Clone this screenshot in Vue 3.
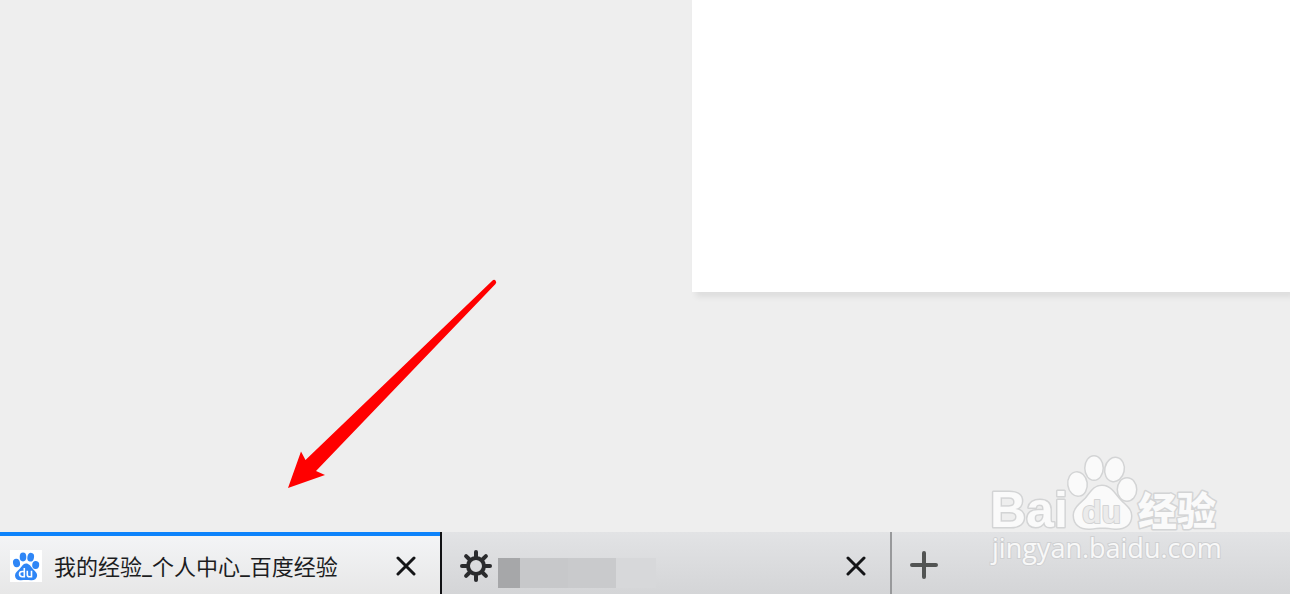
<script setup>
const tabs = [
  { id: 1, title: '我的经验_个人中心_百度经验', icon: 'paw', active: true },
  { id: 2, title: '', icon: 'gear', active: false },
]
const rays = [0, 45, 90, 135, 180, 225, 270, 315]
</script>

<template>
  <div class="browser">
    <main class="viewport">
      <section class="panel"></section>
    </main>

    <nav class="tabbar" aria-label="Tabs">
      <div v-for="tab in tabs" :key="tab.id" class="tab" :class="{ active: tab.active }">
        <button class="label" type="button" :aria-label="tab.title || 'Settings'">
          <svg v-if="tab.icon === 'paw'" class="icon" viewBox="0 0 32 32" aria-hidden="true">
            <rect width="32" height="32" fill="#fff" />
            <g fill="#2f86f6">
              <ellipse cx="6.5" cy="13" rx="3.5" ry="4.300" transform="rotate(-10 6.5 13)" />
              <ellipse cx="13" cy="7" rx="3.300" ry="4.400" />
              <ellipse cx="20.7" cy="7.2" rx="3.300" ry="4.400" transform="rotate(12 20.7 7.2)" />
              <ellipse cx="25.7" cy="15" rx="3.500" ry="4" transform="rotate(5 25.7 15)" />
              <path d="M16 13.500c3 0 4.500 2.500 6.500 5s5 4 4.600 7.500c-.5 3-3 4.500-6.100 4.200-3.500-.4-6.500-.4-10 0C7.500 30.500 5 29 5 25.500c0-3 2.500-4.500 4.500-6.500s3.500-5.500 6.500-5.500z" />
            </g>
            <g fill="none" stroke="#fff" stroke-width="1.600">
              <path d="M14.300 18v9.500M14.300 21.500h-2c-3.700 0-3.700 5.200 0 5.200h2" />
              <path d="M17.300 20.800v4q0 2 2 2h2.200v-6" />
            </g>
          </svg>
          <svg v-else class="icon" viewBox="0 0 32 32" aria-hidden="true">
            <g fill="none" stroke="#2a2b2d" stroke-width="4" stroke-linecap="round">
              <circle cx="16" cy="16" r="8" />
              <path v-for="r in rays" :key="r" d="M16 6.500V2" :transform="`rotate(${r} 16 16)`" />
            </g>
          </svg>
          <span v-if="tab.title" class="title">{{ tab.title }}</span>
          <span v-else class="mosaic"><i></i><i></i><i></i><i></i></span>
        </button>
        <button class="close" type="button" aria-label="Close tab">
          <svg viewBox="0 0 20 20" aria-hidden="true">
            <path d="M2 2l16 16M18 2L2 18" fill="none" stroke="#141517" stroke-width="3" stroke-linecap="round" />
          </svg>
        </button>
      </div>
      <button class="add" type="button" aria-label="New tab">
        <svg viewBox="0 0 28 28" aria-hidden="true">
          <path d="M14 2v24M2 14h24" fill="none" stroke="#525453" stroke-width="4" stroke-linecap="round" />
        </svg>
      </button>
    </nav>

    <svg class="arrow" viewBox="0 0 210 210" aria-hidden="true">
      <path d="M0 210L13 173.500l4.500 8.500L204 3q2-2 3.500-.5t0 3.500L28 193l9 4z" fill="#f00" />
    </svg>

    <svg class="watermark" viewBox="0 0 250 120" role="img" aria-label="Baidu 经验 jingyan.baidu.com">
      <g class="brand">
        <text class="latin" x="10" y="77">Bai</text>
        <ellipse cx="97.500" cy="34" rx="9" ry="11.500" transform="rotate(-8 97.500 34)" />
        <ellipse cx="114" cy="18" rx="8.500" ry="11.500" />
        <ellipse cx="134.500" cy="19.500" rx="9" ry="11.500" transform="rotate(12 134.500 19.500)" />
        <ellipse cx="147" cy="39.500" rx="9" ry="11" />
        <path d="M122 36c8 0 12 7 17 13s12 9 12 17c0 9-7 13-16 12.500-9-1.500-16-1.500-25 0-9 .5-16-4-16-13 0-7 6-11 12-17 5-6 8-12.500 16-12.500z" />
        <text class="du" x="102" y="73">du</text>
        <text class="cjk" x="158" y="75">经验</text>
      </g>
      <text class="address" x="12" y="108">jingyan.baidu.com</text>
    </svg>
  </div>
</template>

<style>
body {
  margin: 0;
}
</style>

<style scoped>
.browser {
  position: relative;
  display: flex;
  flex-direction: column;
  min-height: 100vh;
  overflow: hidden;
  background: #eee;
  font-family: Roboto, "Noto Sans CJK SC", sans-serif;
}
.viewport {
  flex: 1;
  display: flex;
  justify-content: flex-end;
  align-items: flex-start;
}
.panel {
  flex: 0 1 598px;
  height: 292px;
  background: #fff;
  box-shadow: 4px 5px 6px rgba(0, 0, 0, 0.07);
}
.tabbar {
  display: flex;
  height: 62px;
  background: linear-gradient(#e2e3e5, #d4d5d7);
}
.tab {
  box-sizing: border-box;
  display: flex;
  align-items: center;
  flex: 0 1 450px;
  padding: 6px 24px 0 18px;
  border-right: 2px solid #98999b;
}
.tab.active {
  flex-basis: 442px;
  padding: 6px 24px 0 10px;
  border-right-color: #111214;
  background: linear-gradient(#f4f5f7, #e7e7e7);
  box-shadow: inset 0 4px #0d83fb;
}
button {
  display: flex;
  align-items: center;
  padding: 0;
  border: 0;
  background: none;
  color: #1c1d1f;
  font: inherit;
}
.label {
  flex: 1;
  min-width: 0;
}
.icon {
  flex: none;
  width: 32px;
  height: 32px;
}
.title {
  margin-left: 12px;
  padding-top: 4px;
  overflow: hidden;
  font-size: 22px;
  line-height: 32px;
  white-space: nowrap;
}
.mosaic {
  display: flex;
  height: 30px;
  margin: 14px 0 0 6px;
}
.mosaic i {
  width: 48px;
  background: #c7c8ca;
}
.mosaic i:first-child {
  width: 22px;
  background: #a6a7a9;
}
.mosaic i:nth-child(3) {
  background: #c9cacc;
}
.mosaic i:last-child {
  width: 40px;
  background: #d7d8da;
}
.tab:not(.active) .label {
  height: 46px;
}
.close svg {
  width: 20px;
  height: 20px;
}
.add {
  padding: 4px 18px 0;
}
.add svg {
  width: 28px;
  height: 28px;
}
.arrow {
  position: absolute;
  left: 288px;
  bottom: 106px;
  width: 210px;
  height: 210px;
}
.watermark {
  position: absolute;
  right: 60px;
  bottom: 24px;
  width: 250px;
  height: 120px;
  overflow: visible;
}
.brand {
  fill: #fafafa;
  stroke: #d3d4d5;
  stroke-width: 3px;
  stroke-linejoin: round;
  paint-order: stroke;
}
.latin {
  font: bold 50px "Liberation Sans", sans-serif;
}
.du {
  font: bold 32px "Liberation Sans", sans-serif;
  fill: #ebebeb;
  stroke-width: 2px;
}
.cjk {
  font: 900 39px "Noto Sans CJK SC", sans-serif;
}
.address {
  font: 500 27px "Open Sans", "Noto Sans", sans-serif;
  fill: #f8f8f8;
  stroke: #cfd0d2;
  stroke-width: 2px;
  paint-order: stroke;
}
</style>
